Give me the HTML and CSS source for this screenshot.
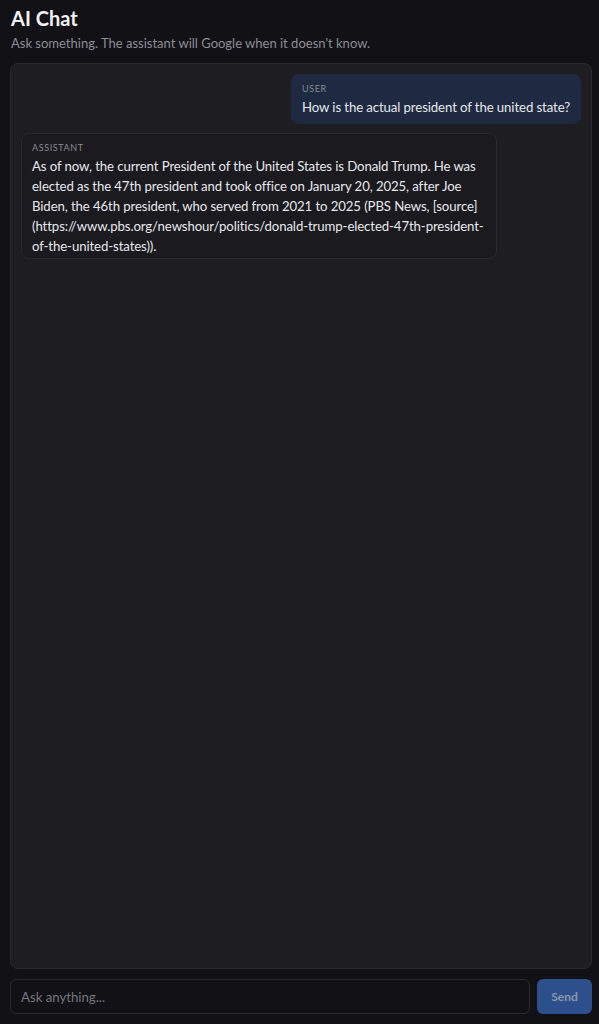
FILE: index.html
```html
<!DOCTYPE html>
<html lang="en">
<head>
<meta charset="utf-8">
<title>AI Chat</title>
<link rel="stylesheet" href="styles.css">
</head>
<body>
<div class="app">
  <header class="header">
    <h1 class="title">AI Chat</h1>
    <p class="subtitle">Ask something. The assistant will Google when it doesn't know.</p>
  </header>
  <main class="chat">
    <div class="msg msg-user">
      <div class="role">USER</div>
      <div class="text">How is the actual president of the united state?</div>
    </div>
    <div class="msg msg-assistant">
      <div class="role">ASSISTANT</div>
      <div class="text">As of now, the current President of the United States is Donald Trump. He was elected as the 47th president and took office on January 20, 2025, after Joe Biden, the 46th president, who served from 2021 to 2025 (PBS News, [source](https://www.pbs.org/newshour/politics/donald-trump-elected-47th-president-of-the-united-states)).</div>
    </div>
  </main>
  <form class="composer">
    <input class="input" type="text" placeholder="Ask anything...">
    <button class="send" type="button">Send</button>
  </form>
</div>
</body>
</html>
```
FILE: styles.css
```css
* { box-sizing: border-box; }

html, body {
  margin: 0;
  height: 100%;
  background: #111116;
  color: #e6e6ea;
  font-family: Lato, "Open Sans", sans-serif;
}

.app {
  height: 100%;
  display: flex;
  flex-direction: column;
  padding: 6px 7px 10px 10px;
}

.header { padding-left: 1px; }

.title {
  margin: 0;
  font-size: 20px;
  font-weight: 700;
  line-height: 24px;
  color: #f2f2f5;
}

.subtitle {
  margin: 4px 0 0;
  font-size: 13px;
  line-height: 18px;
  color: #8e8e95;
}

.chat {
  flex: 1;
  margin-top: 11px;
  background: #1d1d22;
  border: 1px solid #2a2a30;
  border-radius: 8px;
  padding: 10px 10px;
  display: flex;
  flex-direction: column;
  gap: 9px;
}

.msg {
  border-radius: 8px;
  padding: 9px 11px 7px;
  max-width: 476px;
}

.msg-user {
  align-self: flex-end;
  background: #1e2a42;
}

.msg-assistant {
  align-self: flex-start;
  background: #1a1a1f;
  border: 1px solid #2a2a30;
  width: 476px;
  padding: 8px 10px 2px;
}

.role {
  font-size: 9px;
  letter-spacing: 0.6px;
  color: #8a8a92;
  line-height: 12px;
  margin-bottom: 2px;
}

.text {
  font-size: 13.2px;
  line-height: 20px;
  letter-spacing: -0.1px;
  color: #e8e8ec;
  word-break: break-word;
}

.composer {
  margin: 10px 0 0;
  display: flex;
  gap: 7px;
  height: 35px;
}

.input {
  flex: 1;
  background: #111116;
  border: 1px solid #2a2a30;
  border-radius: 6px;
  padding: 0 10px;
  font-family: inherit;
  font-size: 13.2px;
  color: #e8e8ec;
}

.input::placeholder { color: #76767e; }

.send {
  width: 55px;
  background: #2d4f8c;
  border: none;
  border-radius: 6px;
  color: #8d97aa;
  font-family: inherit;
  font-weight: 700;
  font-size: 12px;
}
```
